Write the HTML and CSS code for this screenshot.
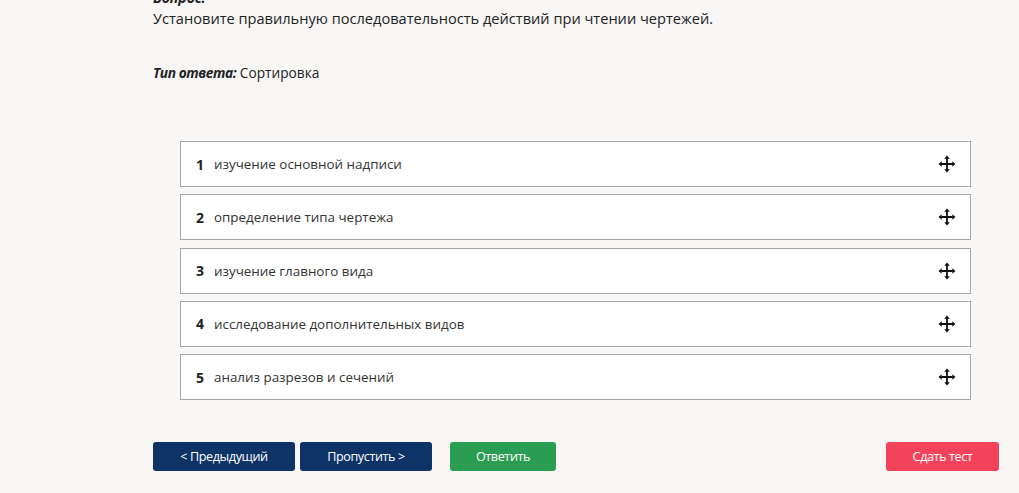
FILE: index.html
```html
<!DOCTYPE html>
<html lang="ru">
<head>
<meta charset="utf-8">
<title>Вопрос</title>
<link rel="stylesheet" href="styles.css">
</head>
<body>
<div class="page">
  <div class="label">Вопрос:</div>
  <div class="question">Установите правильную последовательность действий при чтении чертежей.</div>
  <div class="type"><em>Тип ответа:</em> Сортировка</div>

  <ul class="sortlist">
    <li class="item"><span class="num">1</span><span class="txt">изучение основной надписи</span><svg class="move" viewBox="0 0 18 18"><path d="M9 3v12M3 9h12" stroke="#111" stroke-width="1.8"/><path d="M9 0.5l-2.8 3.2h5.6zM9 17.5l-2.8-3.2h5.6zM0.5 9l3.2-2.8v5.6zM17.5 9l-3.2-2.8v5.6z" fill="#111"/></svg></li>
    <li class="item"><span class="num">2</span><span class="txt">определение типа чертежа</span><svg class="move" viewBox="0 0 18 18"><path d="M9 3v12M3 9h12" stroke="#111" stroke-width="1.8"/><path d="M9 0.5l-2.8 3.2h5.6zM9 17.5l-2.8-3.2h5.6zM0.5 9l3.2-2.8v5.6zM17.5 9l-3.2-2.8v5.6z" fill="#111"/></svg></li>
    <li class="item"><span class="num">3</span><span class="txt">изучение главного вида</span><svg class="move" viewBox="0 0 18 18"><path d="M9 3v12M3 9h12" stroke="#111" stroke-width="1.8"/><path d="M9 0.5l-2.8 3.2h5.6zM9 17.5l-2.8-3.2h5.6zM0.5 9l3.2-2.8v5.6zM17.5 9l-3.2-2.8v5.6z" fill="#111"/></svg></li>
    <li class="item"><span class="num">4</span><span class="txt">исследование дополнительных видов</span><svg class="move" viewBox="0 0 18 18"><path d="M9 3v12M3 9h12" stroke="#111" stroke-width="1.8"/><path d="M9 0.5l-2.8 3.2h5.6zM9 17.5l-2.8-3.2h5.6zM0.5 9l3.2-2.8v5.6zM17.5 9l-3.2-2.8v5.6z" fill="#111"/></svg></li>
    <li class="item"><span class="num">5</span><span class="txt">анализ разрезов и сечений</span><svg class="move" viewBox="0 0 18 18"><path d="M9 3v12M3 9h12" stroke="#111" stroke-width="1.8"/><path d="M9 0.5l-2.8 3.2h5.6zM9 17.5l-2.8-3.2h5.6zM0.5 9l3.2-2.8v5.6zM17.5 9l-3.2-2.8v5.6z" fill="#111"/></svg></li>
  </ul>

  <div class="actions">
    <button class="btn btn-navy btn-prev">&lt; Предыдущий</button>
    <button class="btn btn-navy btn-skip">Пропустить &gt;</button>
    <button class="btn btn-green">Ответить</button>
    <span class="spacer"></span>
    <button class="btn btn-red">Сдать тест</button>
  </div>
</div>
</body>
</html>
```

FILE: styles.css
```css
html, body {
  margin: 0;
  padding: 0;
  background: #f8f7f6;
}
body {
  font-family: "Open Sans", "Noto Sans", sans-serif;
  color: #222;
  overflow: hidden;
}
.page {
  margin-top: -12px;
  padding: 0 20px 0 153px;
  width: 846px;
}
.label {
  font-size: 14px;
  font-weight: 700;
  font-style: italic;
  line-height: 20px;
}
.question {
  font-size: 14.6px;
  line-height: 20px;
}
.type {
  margin-top: 36px;
  font-size: 13.7px;
  line-height: 18px;
}
.type em {
  font-weight: 700;
  letter-spacing: -0.4px;
}
.sortlist {
  list-style: none;
  margin: 59px 28px 0 27px;
  padding: 0;
  display: flex;
  flex-direction: column;
  gap: 7.25px;
}
.item {
  height: 44px;
  box-sizing: content-box;
  border: 1px solid #a6a6a6;
  background: #fff;
  display: flex;
  align-items: center;
  padding: 0 15px;
}
.num {
  font-weight: 700;
  font-size: 14px;
  color: #222;
  width: 18px;
}
.txt {
  font-size: 13.4px;
  color: #333;
  flex: 1;
}
.move {
  flex-shrink: 0;
  width: 18px;
  height: 18px;
  margin-right: -1px;
}
.actions {
  margin-top: 42px;
  display: flex;
  align-items: center;
}
.btn {
  height: 29px;
  border: none;
  border-radius: 3px;
  color: #fff;
  font-family: "Open Sans", "Noto Sans", sans-serif;
  font-size: 12.6px;
  letter-spacing: -0.4px;
  padding: 0;
  cursor: pointer;
}
.btn-navy { background: #0d3367; }
.btn-prev { width: 142px; }
.btn-skip { width: 132px; margin-left: 5px; }
.btn-green { background: #2a9d52; width: 106px; margin-left: 18px; }
.spacer { flex: 1; }
.btn-red { background: #f2435a; width: 113px; }
```
